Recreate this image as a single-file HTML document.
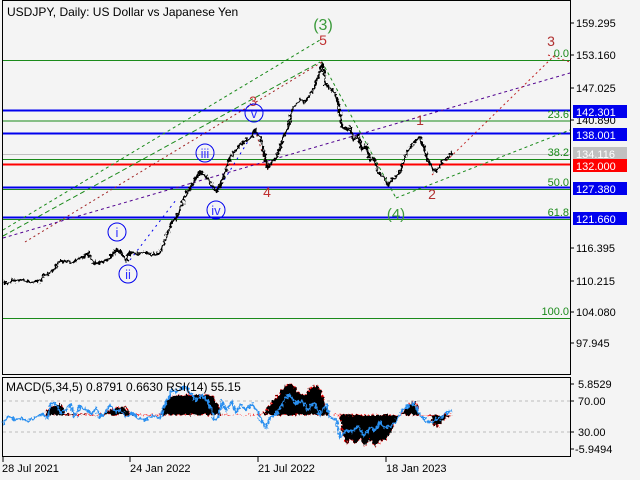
<!DOCTYPE html>
<html><head><meta charset="utf-8"><style>
html,body{margin:0;padding:0;background:#f4f4f4;width:640px;height:480px;overflow:hidden}
svg{display:block;font-family:"Liberation Sans",sans-serif}
</style></head><body>
<svg width="640" height="480" viewBox="0 0 640 480">
<defs>
<filter id="jag" x="-5%" y="-5%" width="110%" height="110%">
<feTurbulence type="fractalNoise" baseFrequency="0.4 0.3" numOctaves="2" seed="3" result="n"/>
<feDisplacementMap in="SourceGraphic" in2="n" scale="6" xChannelSelector="R" yChannelSelector="G"/>
</filter>
</defs>
<rect x="0" y="0" width="640" height="480" fill="#f4f4f4"/>
<g stroke="#1a8a1a" stroke-width="1">
<line x1="3" y1="60.5" x2="570" y2="60.5"/>
<line x1="3" y1="121" x2="570" y2="121"/>
<line x1="3" y1="159.5" x2="570" y2="159.5"/>
<line x1="3" y1="189.5" x2="570" y2="189.5"/>
<line x1="3" y1="219.5" x2="570" y2="219.5"/>
<line x1="3" y1="318.5" x2="570" y2="318.5"/>
</g>
<line x1="3" y1="154.5" x2="570" y2="154.5" stroke="#c0c0c0"/>
<g stroke="#0000ee" stroke-width="2">
<line x1="3" y1="110.5" x2="570" y2="110.5"/>
<line x1="3" y1="133.5" x2="570" y2="133.5"/>
<line x1="3" y1="187.5" x2="570" y2="187.5"/>
<line x1="3" y1="217.5" x2="570" y2="217.5"/>
</g>
<line x1="3" y1="164.5" x2="570" y2="164.5" stroke="#ff0000" stroke-width="2"/>
<g fill="none" stroke-width="1" stroke-dasharray="3,3">
<line x1="3" y1="230" x2="320" y2="40" stroke="#1a8a1a"/>
<line x1="3" y1="236" x2="320" y2="62" stroke="#1a8a1a" stroke-dasharray="5,3"/>
<line x1="25" y1="242" x2="322" y2="62" stroke="#a02020" stroke-dasharray="2,3"/>
<line x1="3" y1="238" x2="570" y2="73" stroke="#500090"/>
<line x1="322" y1="62" x2="396" y2="198" stroke="#1a8a1a"/>
<line x1="396" y1="198" x2="570" y2="130" stroke="#1a8a1a"/>
<line x1="432" y1="175" x2="555" y2="55" stroke="#c02020" stroke-dasharray="2,3"/>
<line x1="130" y1="260" x2="176" y2="200" stroke="#0000ee" stroke-dasharray="2,4"/>
<line x1="218" y1="190" x2="255" y2="130" stroke="#0000ee" stroke-dasharray="2,4"/>
<line x1="255" y1="130" x2="268" y2="170" stroke="#a02020" stroke-dasharray="2,3"/>
<line x1="548" y1="55" x2="570" y2="62" stroke="#c02020" stroke-dasharray="2,3"/>
</g>
<polyline filter="url(#jag)" fill="none" stroke="#000" stroke-width="2.2" stroke-linejoin="miter" points="3,282 8,284 12,280 16,281 22,280 30,282 40,281 44,275 50,273 55,268 58,262 65,261 72,263 78,259 85,256 89,253 92,261 96,264 104,261 110,258 117,249 122,254 126,260 130,252 138,254 145,252 152,255 160,253 163,245 168,232 172,222 176,218 180,210 184,198 188,192 192,185 196,178 200,172 205,175 210,182 216,192 220,186 224,176 228,162 232,155 236,150 240,145 244,142 248,140 252,136 255,130 258,134 262,142 265,158 268,168 272,162 276,158 280,148 284,135 288,128 292,110 296,104 300,100 304,102 308,98 312,92 316,82 320,72 322,64 324,70 326,85 330,88 334,92 338,102 342,126 346,130 350,127 354,140 358,135 362,150 366,145 370,160 374,158 378,172 384,178 388,185 392,180 396,176 400,172 404,160 408,150 412,145 416,140 420,137 424,148 428,160 432,168 436,172 440,165 444,160 448,158 452,152"/>
<g font-size="14" text-anchor="middle">
<text x="323" y="30" fill="#3a9a3a" font-size="16">(3)</text>
<text x="323" y="45" fill="#c03030">5</text>
<text x="551" y="46" fill="#b03030">3</text>
<text x="420" y="125" fill="#b03030">1</text>
<text x="432" y="199" fill="#b03030">2</text>
<text x="396" y="219" fill="#3a9a3a" font-size="15">(4)</text>
<text x="253" y="106" fill="#c03030">3</text>
<text x="267" y="197" fill="#c03030">4</text>
</g>
<g fill="none" stroke="#0000ee" stroke-width="1">
<circle cx="254" cy="113" r="9"/><circle cx="205" cy="153" r="9"/><circle cx="216" cy="210" r="9"/><circle cx="117" cy="232" r="9"/><circle cx="128" cy="274" r="9"/>
</g>
<g font-size="13" fill="#3030ff" text-anchor="middle">
<text x="254" y="118">v</text><text x="205" y="158">iii</text><text x="216" y="215">iv</text><text x="117" y="237">i</text><text x="128" y="279">ii</text>
</g>
<g font-size="11" fill="#1a8a1a" text-anchor="end">
<text x="569" y="57">0.0</text><text x="569" y="118">23.6</text><text x="569" y="156">38.2</text><text x="569" y="186">50.0</text><text x="569" y="216">61.8</text><text x="569" y="315">100.0</text>
</g>
<text x="7" y="16" font-size="12" fill="#000">USDJPY, Daily:  US Dollar vs Japanese Yen</text>
<rect x="2.5" y="0.5" width="568" height="374" fill="none" stroke="#000"/>
<rect x="2.5" y="377.5" width="568" height="79" fill="none" stroke="#000"/>
<g font-size="11" fill="#000">
<g stroke="#000"><line x1="570" y1="23" x2="574" y2="23"/><line x1="570" y1="55" x2="574" y2="55"/><line x1="570" y1="88" x2="574" y2="88"/><line x1="570" y1="120" x2="574" y2="120"/><line x1="570" y1="248" x2="574" y2="248"/><line x1="570" y1="281" x2="574" y2="281"/><line x1="570" y1="312" x2="574" y2="312"/><line x1="570" y1="343" x2="574" y2="343"/></g>
<text x="576" y="27">159.295</text><text x="576" y="59">153.160</text><text x="576" y="92">147.025</text><text x="576" y="124">140.890</text><text x="576" y="252">116.395</text><text x="576" y="285">110.215</text><text x="576" y="316">104.080</text><text x="576" y="347">97.945</text>
</g>
<g font-size="11">
<rect x="573" y="105" width="54" height="13" fill="#0000ee"/><text x="576" y="116" fill="#fff">142.301</text>
<rect x="573" y="128" width="54" height="13" fill="#0000ee"/><text x="576" y="139" fill="#fff">138.001</text>
<rect x="573" y="147" width="54" height="13" fill="#c0c0c0"/><text x="576" y="158" fill="#fff">134.116</text>
<rect x="573" y="159" width="54" height="13" fill="#ff0000"/><text x="576" y="170" fill="#fff">132.000</text>
<rect x="573" y="182" width="54" height="13" fill="#0000ee"/><text x="576" y="193" fill="#fff">127.380</text>
<rect x="573" y="212" width="54" height="13" fill="#0000ee"/><text x="576" y="223" fill="#fff">121.660</text>
</g>
<g stroke="#bbb" stroke-dasharray="3,3"><line x1="3" y1="401" x2="570" y2="401"/><line x1="3" y1="432" x2="570" y2="432"/></g>
<polygon filter="url(#jag)" fill="#000" points="45,415 48,408 55,406 60,403 66,414 100,415 110,410 118,407 125,407 130,414 140,415 160,415 165,404 170,398 175,395 212,395 218,405 222,415 262,415 268,408 272,402 278,395 285,386 292,384 298,392 304,395 310,388 318,385 324,400 330,415 340,415 342,430 346,445 350,438 355,445 360,438 365,446 370,440 375,446 382,440 386,440 392,430 396,420 400,415 405,410 410,403 416,402 420,415 430,415 432,420 436,428 440,424 444,420 448,417 452,415" stroke="#ff0000" stroke-width="0.8" stroke-dasharray="2,2"/>
<polyline filter="url(#jag)" fill="none" stroke="#2a8fef" stroke-width="2" points="3,424 8,416 14,420 20,418 28,421 36,417 42,414 48,418 50,405 55,402 60,412 64,412 70,405 75,416 80,406 86,410 92,414 96,408 100,417 105,413 110,405 116,412 120,410 126,417 132,413 138,418 145,420 152,416 160,418 164,406 168,400 172,390 178,392 184,386 190,392 196,400 202,395 208,402 212,410 214,420 218,418 222,402 226,410 232,402 236,412 240,405 246,410 252,404 258,412 262,422 266,428 270,418 278,412 285,398 290,395 296,404 302,400 308,410 314,402 320,415 326,405 330,417 336,420 340,438 346,430 352,432 358,426 364,436 370,428 375,430 380,422 385,428 390,426 394,424 398,418 402,410 408,406 414,403 420,415 425,420 430,423 436,420 440,418 444,414 448,412 452,410"/>
<text x="6" y="391" font-size="12" fill="#000">MACD(5,34,5) 0.8791 0.6630 RSI(14) 55.15</text>
<g font-size="11" fill="#000">
<g stroke="#000"><line x1="570" y1="384" x2="574" y2="384"/><line x1="570" y1="401" x2="574" y2="401"/><line x1="570" y1="432" x2="574" y2="432"/><line x1="570" y1="449" x2="574" y2="449"/></g>
<text x="578" y="388">5.8529</text><text x="578" y="405">70.00</text><text x="578" y="436">30.00</text><text x="575" y="453">-5.9494</text>
</g>
<g stroke="#000"><line x1="3" y1="457" x2="3" y2="462"/><line x1="130" y1="457" x2="130" y2="462"/><line x1="258" y1="457" x2="258" y2="462"/><line x1="386" y1="457" x2="386" y2="462"/></g>
<g font-size="11" fill="#000"><text x="2" y="472">28 Jul 2021</text><text x="130" y="472">24 Jan 2022</text><text x="258" y="472">21 Jul 2022</text><text x="386" y="472">18 Jan 2023</text></g>
</svg>
</body></html>
